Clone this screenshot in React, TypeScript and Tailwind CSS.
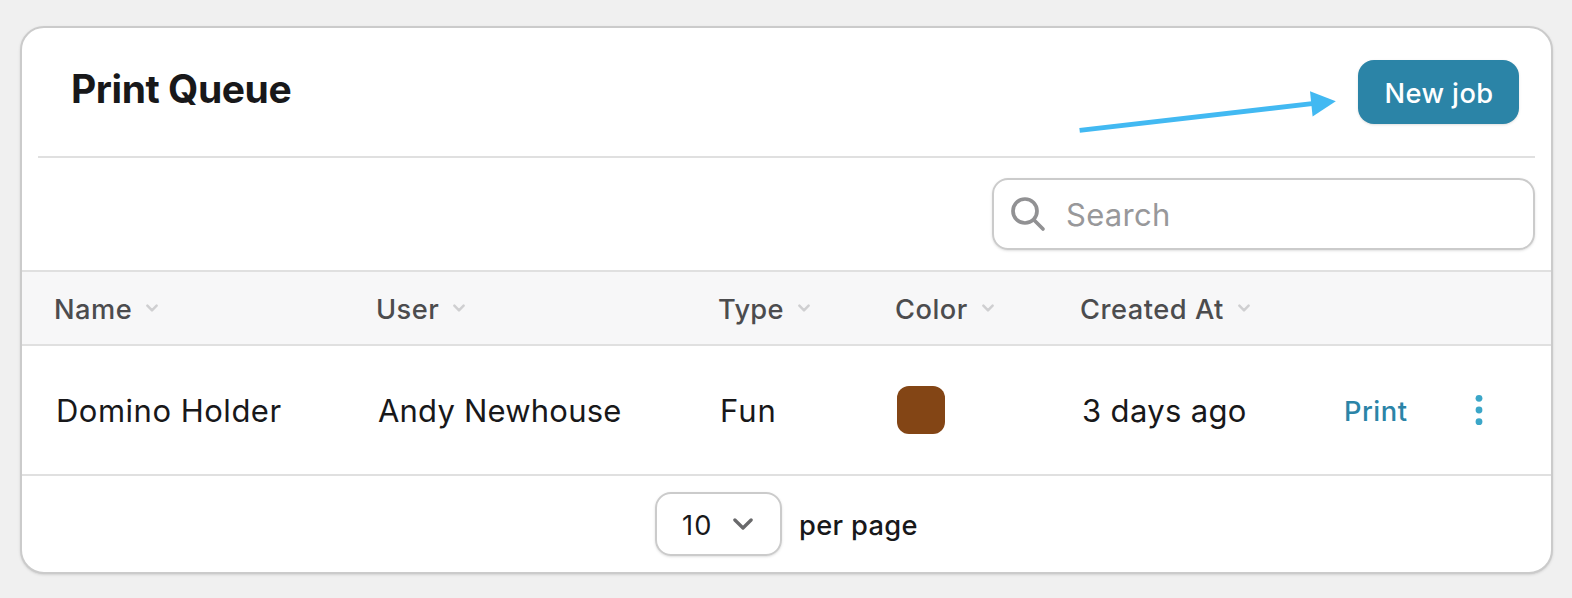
const columns = [
  { label: "Name", width: "w-[322px]", tracking: "tracking-[0.45px]" },
  { label: "User", width: "w-[342px]", tracking: "tracking-[0.45px]" },
  { label: "Type", width: "w-[177px]", tracking: "tracking-[0.3px]" },
  { label: "Color", width: "w-[185px]", tracking: "tracking-[0.5px]" },
  { label: "Created At", width: "w-[260px]", tracking: "tracking-[0.5px]" },
];

function SortChevron() {
  return (
    <svg viewBox="0 0 12 8" fill="none" stroke="#cfcfd1" strokeWidth="2.5" strokeLinecap="round" strokeLinejoin="round" className="ml-3.5 h-2 w-3">
      <path d="M1.4 1.7L6 6.3L10.6 1.7" />
    </svg>
  );
}

export default function App() {
  return (
    <div className="h-[598px] w-[1572px] overflow-hidden bg-[#f0f0f0] pt-[26px] pl-5 font-['Inter',sans-serif] text-[#18181a]">
      <main className="flex h-[548px] w-[1533px] flex-col rounded-3xl border-2 border-[#cbcbcb] bg-white shadow-sm">
        <header className="relative mx-4 flex h-[130px] shrink-0 items-start justify-between border-b-2 border-[#e0e0e0] pt-8 pr-4 pl-8">
          <h1 className="mt-[5px] ml-px text-[39px] leading-[48px] font-bold tracking-[-0.45px]">Print Queue</h1>
          <button className="h-16 w-[161px] rounded-2xl bg-[#2b84a7] pt-[3px] pl-px text-[27.25px] leading-10 font-medium tracking-[0.4px] text-white shadow-sm">
            New job
          </button>
          <svg viewBox="0 0 260 44" className="absolute top-[62px] left-[1040px] h-11 w-[260px]">
            <path d="M1.6 40.3L234 13.7" stroke="#42b9f2" strokeWidth="4.8" />
            <path d="M232 1.3L257.8 11.2L234.6 26.5Z" fill="#42b9f2" />
          </svg>
        </header>

        <div className="flex h-28 shrink-0 justify-end pt-5 pr-4">
          <label className="flex h-[72px] w-[543px] items-center rounded-2xl border-2 border-[#cbcbcb] shadow-sm">
            <svg viewBox="0 0 36 36" fill="none" stroke="#919193" strokeWidth="3.7" strokeLinecap="round" className="ml-4 size-9">
              <circle cx="15" cy="15" r="12" />
              <path d="M24 24L33 33" />
            </svg>
            <span className="ml-5 pt-px text-[31px] leading-[48px] tracking-[0.3px] text-[#98989a]">Search</span>
          </label>
        </div>

        <div className="flex h-[76px] shrink-0 items-center border-y-2 border-[#e0e0e0] bg-[#f7f7f8] pl-8">
          {columns.map((c) => (
            <div key={c.label} className={`flex shrink-0 items-center ${c.width}`}>
              <span className={`pt-[3px] text-[27.25px] leading-10 font-medium text-[#4c4c4e] ${c.tracking}`}>{c.label}</span>
              <SortChevron />
            </div>
          ))}
        </div>

        <div className="flex h-[130px] shrink-0 items-center border-b-2 border-[#e0e0e0] pl-[34px] text-[31px] leading-[48px]">
          <div className="w-[322px] pt-px tracking-[0.5px]">Domino Holder</div>
          <div className="w-[342px] pt-px tracking-[0.2px]">Andy Newhouse</div>
          <div className="w-[177px] pt-px tracking-[0.9px]">Fun</div>
          <div className="w-[185px]">
            <div className="size-12 rounded-xl bg-[#834515]" />
          </div>
          <div className="w-[262px] pt-px tracking-[0.35px]">3 days ago</div>
          <a className="w-[131px] pt-[3px] text-[27.25px] leading-10 font-medium tracking-[0.5px] text-[#2b84a7]">Print</a>
          <svg viewBox="0 0 8 32" fill="#3ba6c8" className="h-8 w-2">
            <circle cx="4" cy="4.3" r="3.4" />
            <circle cx="4" cy="16" r="3.4" />
            <circle cx="4" cy="27.7" r="3.4" />
          </svg>
        </div>

        <footer className="flex grow items-center pl-[633px]">
          <div className="flex h-16 w-[127px] items-center rounded-2xl border-2 border-[#cbcbcb] pl-[25px] shadow-sm">
            <span className="w-[51px] pt-[3px] text-[27.25px] leading-10 tracking-[1.2px]">10</span>
            <svg viewBox="0 0 20 12" fill="none" stroke="#69696b" strokeWidth="3.3" strokeLinecap="round" strokeLinejoin="round" className="h-3 w-5">
              <path d="M1.9 2L10 10L18.1 2" />
            </svg>
          </div>
          <span className="ml-[17px] pt-[3px] text-[27.25px] leading-10 font-medium tracking-[0.35px]">per page</span>
        </footer>
      </main>
    </div>
  );
}
